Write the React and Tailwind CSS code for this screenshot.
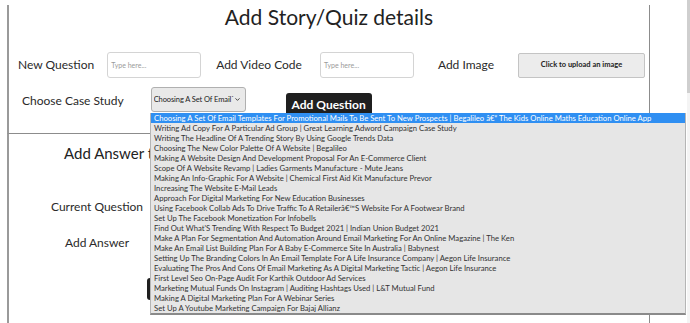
import React from 'react'
import { ChevronDown } from 'lucide-react'

const caseStudies = [
  'Choosing A Set Of Email Templates For Promotional Mails To Be Sent To New Prospects | Begalileo â€“ The Kids Online Maths Education Online App',
  'Writing Ad Copy For A Particular Ad Group | Great Learning Adword Campaign Case Study',
  'Writing The Headline Of A Trending Story By Using Google Trends Data',
  'Choosing The New Color Palette Of A Website | Begalileo',
  'Making A Website Design And Development Proposal For An E-Commerce Client',
  'Scope Of A Website Revamp | Ladies Garments Manufacture - Mute Jeans',
  'Making An Info-Graphic For A Website | Chemical First Aid Kit Manufacture Prevor',
  'Increasing The Website E-Mail Leads',
  'Approach For Digital Marketing For New Education Businesses',
  'Using Facebook Collab Ads To Drive Traffic To A Retailerâ€™S Website For A Footwear Brand',
  'Set Up The Facebook Monetization For Infobells',
  "Find Out What'S Trending With Respect To Budget 2021 | Indian Union Budget 2021",
  'Make A Plan For Segmentation And Automation Around Email Marketing For An Online Magazine | The Ken',
  'Make An Email List Building Plan For A Baby E-Commerce Site In Australia | Babynest',
  'Setting Up The Branding Colors In An Email Template For A Life Insurance Company | Aegon Life Insurance',
  'Evaluating The Pros And Cons Of Email Marketing As A Digital Marketing Tactic | Aegon Life Insurance',
  'First Level Seo On-Page Audit For Karthik Outdoor Ad Services',
  'Marketing Mutual Funds On Instagram | Auditing Hashtags Used | L&T Mutual Fund',
  'Making A Digital Marketing Plan For A Webinar Series',
  'Set Up A Youtube Marketing Campaign For Bajaj Allianz',
]

function TextInput() {
  return (
    <div className="flex h-[26px] w-[94px] items-center rounded-[3px] border border-[#d4d4d4] bg-white px-[3px]">
      <span className="text-[7px] text-[#9a9a9a]">Type here...</span>
    </div>
  )
}

function App() {
  return (
    <div className="flex h-[323px] w-[690px] overflow-hidden bg-white font-['Lato',sans-serif] text-[#2a2a2a]">
      <div className="relative flex-1 pl-[7px]">
        {/* Story / quiz details */}
        <div className="h-[128px] w-[643px] border-l-2 border-r border-l-[#9a9a9a] border-r-[#8c8c8c]">
          <h1 className="mt-[5px] text-center text-[21px] leading-[24px] text-[#222]">Add Story/Quiz details</h1>

          <div className="mt-[23px] flex items-center">
            <span className="ml-[9px] text-[12px]">New Question</span>
            <div className="ml-[13px]"><TextInput /></div>
            <span className="ml-[15px] text-[12px]">Add Video Code</span>
            <div className="ml-[18px]"><TextInput /></div>
            <span className="ml-[24px] text-[12px]">Add Image</span>
            <div className="ml-[24px] flex h-[25px] w-[127px] items-center justify-center rounded-[2px] border border-[#c4c4c4] bg-[#ececec] text-[7.5px] font-bold text-[#222]">
              Click to upload an image
            </div>
          </div>

          <div className="mt-[9px] flex items-start">
            <span className="ml-[13px] mt-[5px] text-[12px]">Choose Case Study</span>
            <div className="ml-[27px] flex h-[25px] w-[95px] items-center justify-between rounded-[3px] border border-[#b0b0b0] bg-[#e9e9e9] pl-[2px] pr-[4px]">
              <span className="overflow-hidden whitespace-nowrap text-[7.5px] tracking-[-0.1px] text-[#222]">Choosing A Set Of Email`</span>
              <ChevronDown size={7} strokeWidth={3} className="shrink-0 text-[#333]" />
            </div>
            <button className="ml-[40px] mt-[6px] h-[24px] w-[86px] rounded-t-[3px] bg-[#1f1f1f] text-[12px] font-bold text-white">
              Add Question
            </button>
          </div>
        </div>

        {/* Answer section */}
        <div className="h-[200px] w-[643px] border-t border-l-2 border-r border-t-[#8c8c8c] border-l-[#9a9a9a] border-r-[#8c8c8c]">
          <h2 className="ml-[55px] mt-[9px] whitespace-nowrap text-[15px] leading-[20px] text-[#222]">Add Answer to Question</h2>
          <div className="mt-[36px] flex w-[176px] flex-col items-center gap-[20px] text-[12px]">
            <span className="leading-[16px]">Current Question</span>
            <span className="leading-[16px]">Add Answer</span>
          </div>
          <button className="ml-[138px] mt-[27px] h-[22px] w-[70px] rounded-[3px] bg-[#1f1f1f]" />
        </div>

        {/* Open select list */}
        <ul className="absolute left-[150px] top-[113px] h-[202px] w-[536px] border-x border-b-2 border-x-[#b5b5b5] border-b-[#8a8a8a] bg-[#e6e6e6]">
          {caseStudies.map((item, i) => (
            <li
              key={i}
              className={`h-[10px] overflow-hidden whitespace-nowrap pl-[3px] text-[7.7px] leading-[10px] ${
                i === 0 ? 'bg-[#2f8ff2] text-white' : 'text-[#333]'
              }`}
            >
              {item}
            </li>
          ))}
        </ul>
      </div>

      {/* Scrollbar */}
      <div className="w-[3px] bg-[#f4f4f4]">
        <div className="h-[93px] bg-[#cfcfcf]" />
      </div>
    </div>
  )
}

export default App
